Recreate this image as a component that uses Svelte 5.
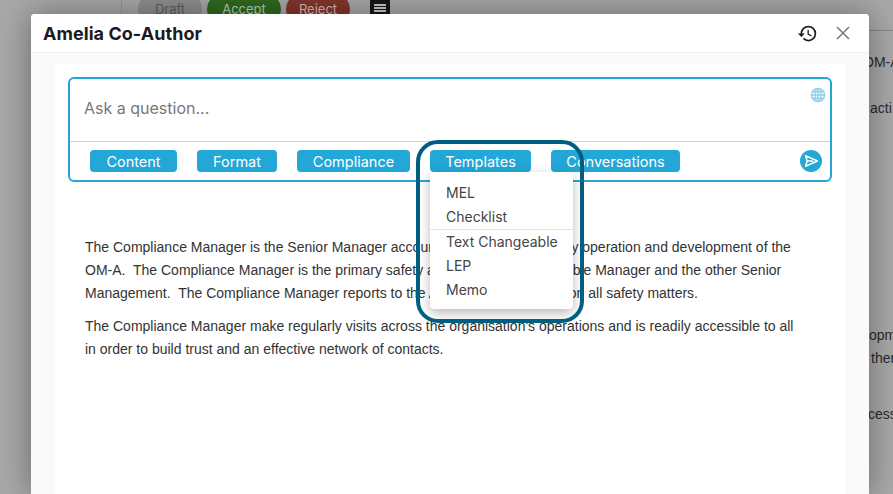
<script>
  const tabs = ['Content', 'Format', 'Compliance', 'Templates', 'Conversations'];
  const fragments = [
    { text: 'OM-A', cls: 'f1' },
    { text: 'acti', cls: 'f2' },
    { text: 'opme', cls: 'f3' },
    { text: 'ther', cls: 'f4' },
    { text: 'cess', cls: 'f5' }
  ];
</script>

<div class="page">
  <div class="toolbar">
    <span class="pill draft">Draft</span>
    <span class="pill accept">Accept</span>
    <span class="pill reject">Reject</span>
    <span class="menu"><i></i><i></i><i></i></span>
  </div>
  <div class="rule"></div>
  <div class="fragments">
    {#each fragments as f}
      <div class={f.cls}>{f.text}</div>
    {/each}
  </div>
</div>

<div class="modal">
  <header class="head">
    <h1>Amelia Co-Author</h1>
    <div class="actions">
      <svg class="hist" viewBox="0 0 24 24" width="21" height="21"><path fill="#1c1c1c" d="M13 3a9 9 0 0 0-9 9H1l3.89 3.89.07.14L9 12H6c0-3.87 3.13-7 7-7s7 3.13 7 7-3.13 7-7 7c-1.93 0-3.68-.79-4.94-2.06l-1.42 1.42A8.954 8.954 0 0 0 13 21a9 9 0 0 0 0-18zm-1 5v5l4.28 2.54.72-1.21-3.5-2.08V8H12z"/></svg>
      <svg class="close" viewBox="0 0 14 14" width="14" height="14"><path d="M1 1l12 12M13 1L1 13" stroke="#777" stroke-width="1.5" fill="none"/></svg>
    </div>
  </header>
  <div class="body">
    <div class="panel">
      <div class="box">
        <div class="ask">
          <span>Ask a question...</span>
          <svg class="globe" viewBox="0 0 16 16" width="16" height="16" fill="none" stroke="#8ed0ea" stroke-width="1.4">
            <circle cx="8" cy="8" r="6.6"/>
            <ellipse cx="8" cy="8" rx="3" ry="6.6"/>
            <path d="M8 1.4v13.2M1.4 8h13.2M2.4 4.8h11.2M2.4 11.2h11.2"/>
          </svg>
        </div>
        <div class="bar">
          <div class="tabs">
            {#each tabs as t}
              <button class="tab">{t}</button>
            {/each}
          </div>
          <svg class="send" viewBox="0 0 22 22" width="22" height="22">
            <circle cx="11" cy="11" r="11" fill="#22a7d7"/>
            <path d="M5.5 5.8L17.5 11 5.5 16.2 7.2 11zM7.2 11h6" fill="none" stroke="#fff" stroke-width="1.5" stroke-linejoin="round"/>
          </svg>
        </div>
      </div>
      <div class="doc">
        <p>The Compliance Manager is the Senior Manager accountable for the day to day operation and development of the OM-A.  The Compliance Manager is the primary safety advisor to the Accountable Manager and the other Senior Management.  The Compliance Manager reports to the Accountable Manager on all safety matters.</p>
        <p>The Compliance Manager make regularly visits across the organisation's operations and is readily accessible to all in order to build trust and an effective network of contacts.</p>
      </div>
    </div>
  </div>
</div>

<div class="dropdown">
  <div class="item">MEL</div>
  <div class="item">Checklist</div>
  <div class="sep"></div>
  <div class="item">Text Changeable</div>
  <div class="item">LEP</div>
  <div class="item">Memo</div>
</div>
<div class="ring"></div>

<style>
  :global(body) {
    margin: 0;
    overflow: hidden;
    background: #a8a8a8;
  }
  .page {
    position: relative;
    height: 494px;
    overflow: hidden;
    background: #a8a8a8;
    font-family: "Liberation Sans", Arial, sans-serif;
  }
  .toolbar {
    display: flex;
    align-items: flex-end;
    margin-left: 121px;
    padding-left: 16px;
    height: 30px;
    border-left: 1px solid #969696;
    font-family: Inter, sans-serif;
    font-size: 13px;
  }
  .pill {
    height: 30px;
    border-radius: 15px;
    display: flex;
    align-items: center;
    justify-content: center;
    margin-right: 5px;
    margin-bottom: 6px;
    box-sizing: border-box;
  }
  .draft { width: 64px; background: #8f8f8f; color: #5f5f5f; }
  .accept { width: 74px; background: #2f6a1f; color: #bcd0b6; }
  .reject { width: 64px; background: #84352c; color: #d6bcb8; }
  .menu {
    width: 20px;
    height: 20px;
    margin-left: 15px;
    margin-bottom: 12px;
    border-radius: 3px;
    background: #161616;
    display: flex;
    flex-direction: column;
    justify-content: center;
    align-items: center;
    gap: 1.5px;
  }
  .menu i {
    width: 12px;
    height: 1.5px;
    background: #c8c8c8;
  }
  .rule {
    margin-left: 121px;
    height: 1px;
    background: #868686;
  }
  .fragments {
    margin-left: 863px;
    font-size: 14px;
    color: #2a2a2a;
    white-space: nowrap;
  }
  .fragments div { height: 16px; line-height: 16px; }
  .f1 { margin-top: 23px; }
  .f2 { margin-top: 30px; margin-left: 7px; }
  .f3 { margin-top: 211px; margin-left: 6px; }
  .f4 { margin-top: 7px; margin-left: 8px; }
  .f5 { margin-top: 40px; margin-left: 5px; }

  .modal {
    position: absolute;
    left: 31px;
    top: 14px;
    width: 838px;
    height: 480px;
    background: #fafafa;
    border-radius: 4px 4px 0 0;
    box-shadow: 0 0 32px rgba(0, 0, 0, 0.38);
    display: flex;
    flex-direction: column;
    font-family: Inter, sans-serif;
  }
  .head {
    height: 39px;
    flex: none;
    box-sizing: border-box;
    background: #fff;
    border-bottom: 1px solid #f0f0f0;
    border-radius: 4px 4px 0 0;
    display: flex;
    align-items: center;
    justify-content: space-between;
    padding: 0 19px 0 12px;
  }
  h1 {
    margin: 0;
    font-size: 18px;
    font-weight: 700;
    color: #1b1b1f;
    letter-spacing: 0.05px;
  }
  .actions {
    display: flex;
    align-items: center;
    gap: 18px;
  }
  .body {
    flex: 1;
    min-height: 0;
    padding: 11px 24px 0;
  }
  .panel {
    height: 100%;
    background: #fff;
    padding: 13px 13px 0;
    box-sizing: border-box;
  }
  .box {
    border: 2px solid #22a7d7;
    border-radius: 6px;
    height: 105px;
    box-sizing: border-box;
    display: flex;
    flex-direction: column;
  }
  .ask {
    height: 63px;
    flex: none;
    box-sizing: border-box;
    border-bottom: 1px solid #d2d2d2;
    padding: 0 4px 0 14px;
    display: flex;
    justify-content: space-between;
    color: #777;
    font-size: 16px;
  }
  .ask span { margin-top: 19px; line-height: 20px; }
  .globe { margin-top: 8px; }
  .bar {
    flex: 1;
    display: flex;
    justify-content: space-between;
    align-items: flex-start;
    padding: 8px 8px 0 20px;
  }
  .tabs {
    display: grid;
    grid-template-columns: 87px 80px 113px 101px 129px;
    gap: 20px;
  }
  .tab {
    height: 22px;
    border: 0;
    border-radius: 4px;
    background: #22a7d7;
    color: #fff;
    font-family: Inter, sans-serif;
    font-size: 14.5px;
    line-height: 22px;
    padding: 1px 0 0;
    margin: 0;
  }
  .doc {
    padding: 54px 25px 0 17px;
    font-family: "Liberation Sans", Arial, sans-serif;
    font-size: 14px;
    line-height: 23px;
    color: #333;
  }
  .doc p { margin: 0 0 10px; white-space: pre-wrap; }

  .dropdown {
    position: absolute;
    left: 430px;
    top: 172px;
    width: 143px;
    height: 137px;
    box-sizing: border-box;
    padding-top: 9px;
    background: #fff;
    border-radius: 4px;
    box-shadow: 0 4px 12px rgba(0, 0, 0, 0.28);
    font-family: Inter, sans-serif;
    font-size: 14px;
    color: #444;
  }
  .item {
    height: 24px;
    line-height: 24px;
    padding-left: 16px;
  }
  .sep {
    height: 1px;
    margin: 0;
    background: #e2e2e2;
  }
  .ring {
    position: absolute;
    left: 416px;
    top: 140px;
    width: 168px;
    height: 183px;
    box-sizing: border-box;
    border: 4px solid #005f80;
    border-radius: 22px;
    pointer-events: none;
  }
</style>
